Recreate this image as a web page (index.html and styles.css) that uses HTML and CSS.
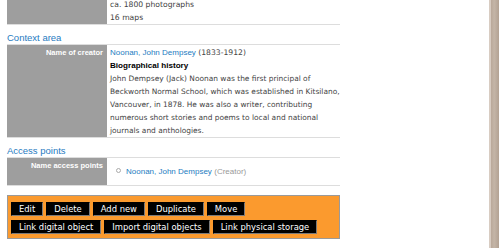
FILE: index.html
```html
<!DOCTYPE html>
<html lang="en">
<head>
  <meta charset="UTF-8">
  <title>Noonan, John Dempsey fonds</title>
  <link rel="stylesheet" href="styles.css">
</head>
<body>
  <div class="page">
    <div class="main">
      <div class="field first">
        <div class="label"></div>
        <div class="value">
          ca. 1800 photographs<br>
          16 maps
        </div>
      </div>

      <h2 class="section-title">Context area</h2>
      <div class="field">
        <div class="label">Name of creator</div>
        <div class="value">
          <a href="#">Noonan, John Dempsey</a> (1833-1912)
          <h3>Biographical history</h3>
          <p>John Dempsey (Jack) Noonan was the first principal of Beckworth Normal School, which was established in Kitsilano, Vancouver, in 1878. He was also a writer, contributing numerous short stories and poems to local and national journals and anthologies.</p>
        </div>
      </div>

      <h2 class="section-title">Access points</h2>
      <div class="field">
        <div class="label">Name access points</div>
        <div class="value">
          <ul class="access-list">
            <li><a href="#">Noonan, John Dempsey</a> <span class="role">(Creator)</span></li>
          </ul>
        </div>
      </div>

      <div class="actions">
        <ul class="action-list">
          <li><a href="#">Edit</a></li>
          <li><a href="#">Delete</a></li>
          <li><a href="#">Add new</a></li>
          <li><a href="#">Duplicate</a></li>
          <li><a href="#">Move</a></li>
        </ul>
        <ul class="action-list">
          <li><a href="#">Link digital object</a></li>
          <li><a href="#">Import digital objects</a></li>
          <li><a href="#">Link physical storage</a></li>
        </ul>
      </div>
    </div>
    <div class="edge"></div>
  </div>
</body>
</html>
```

FILE: styles.css
```css
html, body {
  margin: 0;
  height: 100%;
  overflow: hidden;
  background: #fff;
}
body {
  font-family: "DejaVu Sans", Verdana, sans-serif;
  font-size: 7.65px;
  line-height: 13px;
  color: #444;
}
.page {
  display: flex;
  height: 100vh;
}
.main {
  width: 333px;
  padding-left: 7px;
}
.edge {
  margin-left: auto;
  margin-right: 1px;
  width: 8px;
  border-left: 2px solid #d8ccc2;
  background: linear-gradient(to right, #b9a899, #c4b5a7 40%, #b3a293);
}

/* field rows */
.field {
  display: grid;
  grid-template-columns: 100px 1fr;
  border-top: 1px solid #ddd;
  border-bottom: 1px solid #ddd;
}
.field.first {
  margin-top: -2px;
  border-top: 0;
}
.label {
  background: #9e9e9e;
  color: #fff;
  font-family: "Liberation Sans", Arial, sans-serif;
  font-weight: bold;
  font-size: 7.5px;
  text-align: right;
  padding: 1px 4px 0 0;
}
.value {
  padding: 1px 0 0 3px;
}
.field.first .value {
  padding-top: 0;
}
a {
  color: #1d7cc1;
  text-decoration: none;
  font-family: "Liberation Sans", Arial, sans-serif;
  font-size: 8px;
}
.section-title {
  margin: 0;
  padding-top: 6px;
  font-family: "Liberation Sans", Arial, sans-serif;
  font-weight: normal;
  font-size: 9.5px;
  line-height: 13px;
  color: #1f7bbf;
}
h3 {
  margin: 0;
  font-family: "Liberation Sans", Arial, sans-serif;
  font-size: 8.1px;
  color: #000;
}
p {
  margin: 0;
  font-size: 7.45px;
}

/* access points */
.access-list {
  list-style: none;
  margin: 6px 0 7px;
  padding: 0 0 0 6px;
}
.access-list li::before {
  content: "";
  display: inline-block;
  width: 3px;
  height: 3px;
  border: 1px solid #aaa;
  border-radius: 50%;
  margin-right: 5px;
  vertical-align: 1px;
}
.role {
  font-family: "Liberation Sans", Arial, sans-serif;
  font-size: 8px;
  color: #999;
}

/* action bar */
.actions {
  margin-top: 9px;
  background: #fb9a2e;
  border: 1px solid #9a9a9a;
  padding: 6px 3px 4px;
}
.action-list {
  list-style: none;
  margin: 0;
  padding: 0;
  display: flex;
  gap: 3px;
}
.action-list + .action-list {
  margin-top: 4px;
}
.action-list a {
  display: block;
  background: #000;
  color: #fff;
  font-family: "DejaVu Sans", Verdana, sans-serif;
  font-size: 8.4px;
  line-height: 12px;
  padding: 0 7px;
  border: 1px solid #000;
  border-right-color: #7a7a7a;
  border-bottom-color: #7a7a7a;
}
```
